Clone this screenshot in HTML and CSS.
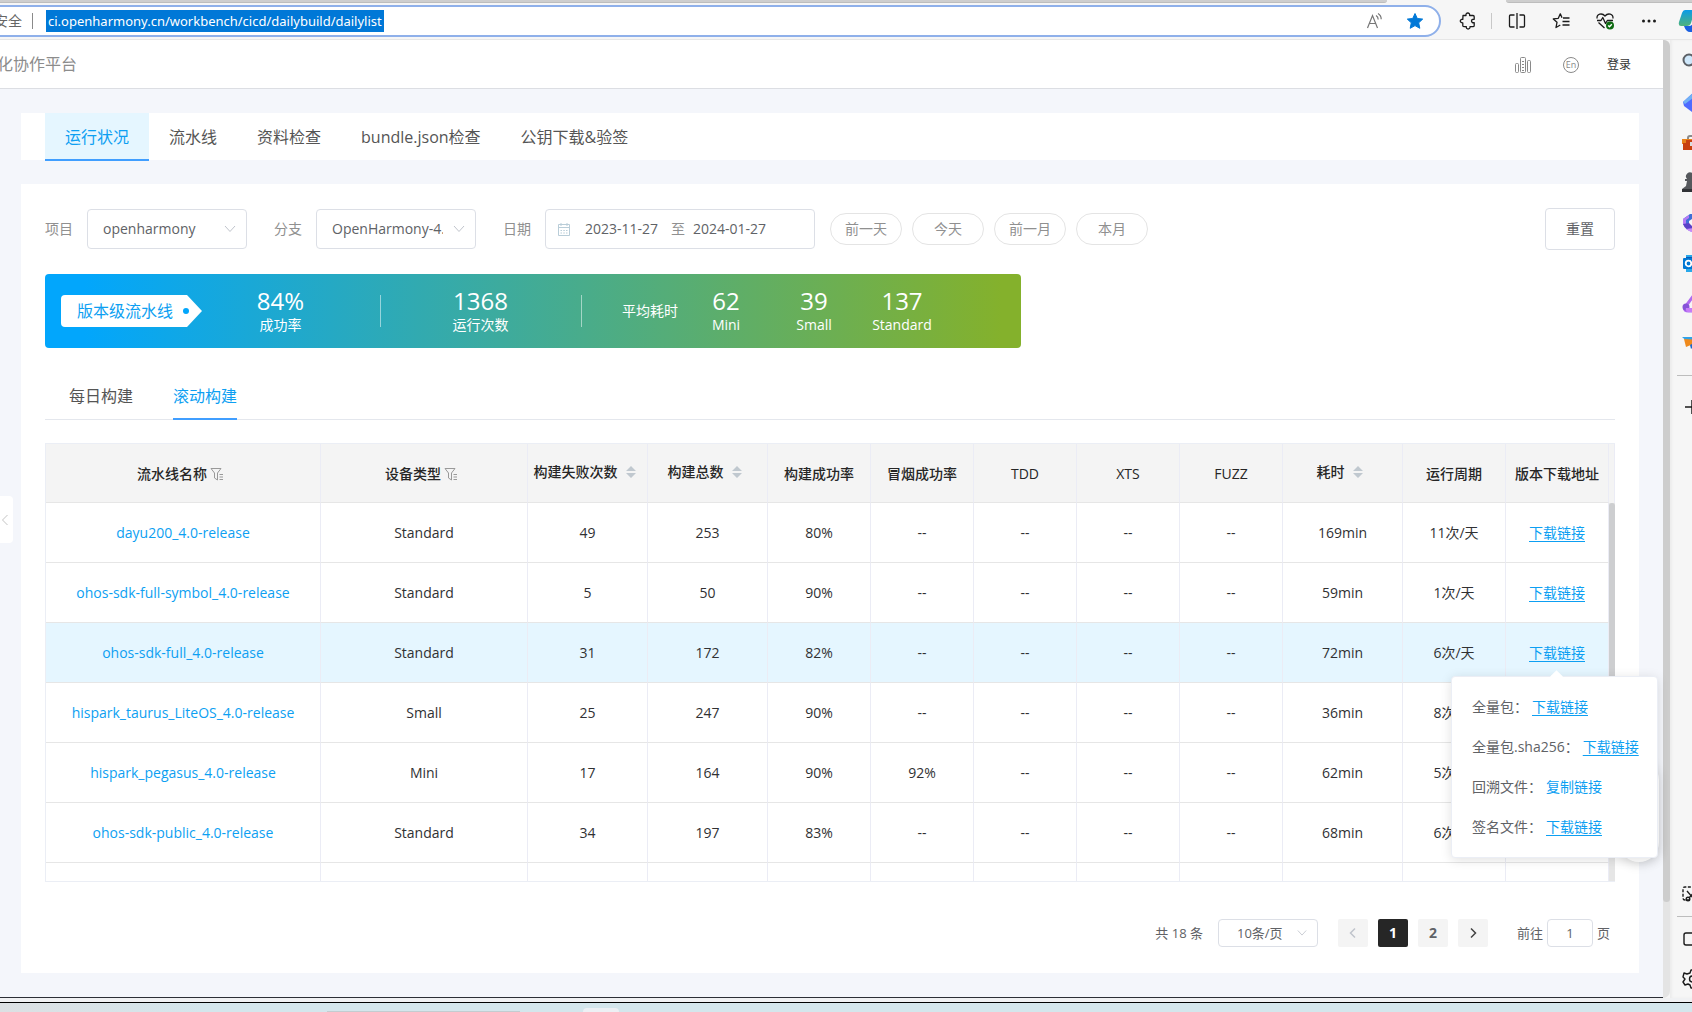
FILE: index.html
```html
<!DOCTYPE html>
<html lang="zh-CN">
<head>
<meta charset="utf-8">
<title>每日构建</title>
<link rel="stylesheet" href="styles.css">
</head>
<body>
<header class="browser">
  <div class="strip"><span class="strip-tab strip-left"></span><span class="strip-tab strip-right"></span></div>
  <div class="toolbar">
    <div class="address">
      <span class="address-safe">安全</span>
      <span class="address-sep"></span>
      <span class="address-url">ci.openharmony.cn/workbench/cicd/dailybuild/dailylist</span>
      <span class="address-icons">
        <svg width="18" height="18" viewBox="0 0 18 18" fill="none" stroke="#767676" stroke-width="1.2"><path d="M1.5 16 6.5 3.5 11.500 16M3.300 11.500h6.400M10 3.500c1.400.8 2.200 2.200 2.200 4M12 1.500c2 1.200 3.200 3.200 3.200 5.700"/></svg>
        <svg width="18" height="18" viewBox="0 0 18 18"><path fill="#0078d7" stroke="#0078d7" stroke-linejoin="round" d="m9 1.500 2.300 5 5.400.6-4 3.700 1.100 5.500L9 13.600l-4.800 2.700 1.100-5.500-4-3.700 5.400-.6z"/></svg>
      </span>
    </div>
    <div class="tools">
      <svg width="18" height="18" viewBox="0 0 18 18" fill="none" stroke="#1b1b1b" stroke-width="1.300" stroke-linejoin="round"><path d="M4 3.500h3c-.3-1.500.6-2.500 1.800-2.500s2.100 1 1.800 2.500H14c.8 0 1.200.4 1.200 1.200v2.600c-1.700-.2-2.700.6-2.700 1.700s1 2 2.700 1.700v2.800c0 .8-.4 1.200-1.200 1.200h-3c.2 1.500-.7 2.300-1.900 2.300s-2-.8-1.800-2.300H5c-.8 0-1.200-.4-1.200-1.200v-2.600C2.200 11 1.300 10 1.300 9s1-1.900 2.500-1.700z"/></svg>
      <span class="tools-sep"></span>
      <svg width="18" height="18" viewBox="0 0 18 18" fill="none" stroke="#1b1b1b" stroke-width="1.300"><path d="M6.500 3h-4q-1 0-1 1v10q0 1 1 1h4M11.500 3h4q1 0 1 1v10q0 1-1 1h-4M9 1v16"/></svg>
      <svg width="18" height="18" viewBox="0 0 18 18" fill="none" stroke="#1b1b1b" stroke-width="1.300" stroke-linejoin="round"><path d="M10 5.800 8.300 1.800 6.300 6.300l-5 .6 3.700 3.400-1 5.200 4.300-2.500M11 6h6.500M10.500 9.500h7M10.500 13h7"/></svg>
      <svg width="18" height="18" viewBox="0 0 18 18" fill="none" stroke="#1b1b1b" stroke-width="1.300" stroke-linejoin="round"><path d="M1 6.500C.6 1.800 6 .5 9 4c3-3.500 8.400-2.200 8 2.500M2.500 10.500 8.500 16M1 8.500h4l1.800-3 2.700 6 1.800-3H17"/><circle cx="14" cy="13.500" r="4" fill="#0e6b12" stroke="none"/><path stroke="#fff" d="m12.200 13.500 1.300 1.300 2.300-2.500"/></svg>
      <svg width="18" height="18" viewBox="0 0 18 18" fill="#1b1b1b"><circle cx="3.500" cy="9" r="1.500"/><circle cx="9" cy="9" r="1.500"/><circle cx="14.500" cy="9" r="1.500"/></svg>
    </div>
    <div class="copilot"><svg width="26" height="26" viewBox="0 0 26 26"><defs><linearGradient id="cp" x1="0" y1="0" x2="0" y2="1"><stop offset="0" stop-color="#0a9be8"/><stop offset="1" stop-color="#4fb37c"/></linearGradient></defs><path fill="url(#cp)" d="M7 2h15l-6 3-3 10q-1 3-4 3H3q-3 0-2-4l3-9q1-3 3-3z"/><path fill="#1a5fe0" d="M6 18h5q3 0 4-3l2 9h-5q-4 0-6-6z"/><path fill="#1299dd" d="m14 14 3 10h-3z"/></svg></div>
  </div>
</header>

<div class="window">
  <div class="page">
    <header class="site-header">
      <span class="site-name">化协作平台</span>
      <nav class="site-nav">
        <svg width="18" height="18" viewBox="0 0 18 18" fill="none" stroke="#8a8a8a"><rect x="1.500" y="7.500" width="3" height="9" rx="1"/><rect x="6.500" y="1.500" width="5" height="15" rx="1"/><rect x="13.500" y="4.500" width="3" height="12" rx="1"/><path d="M8 5.500h2M8 8.500h2M8 11.500h2M8 14.500h2"/></svg>
        <span class="lang">En</span>
        <a class="login" href="#login">登录</a>
      </nav>
    </header>

    <main class="content">
      <nav class="tabs">
        <a class="tab tab-active" href="#status">运行状况</a>
        <a class="tab" href="#pipeline">流水线</a>
        <a class="tab" href="#docs">资料检查</a>
        <a class="tab" href="#bundle">bundle.json检查</a>
        <a class="tab" href="#key">公钥下载&amp;验签</a>
      </nav>

      <section class="card">
        <form class="filters">
          <label for="project">项目</label>
          <span class="select">
            <select id="project"><option>openharmony</option></select>
            <svg width="12" height="12" viewBox="0 0 12 12" fill="none" stroke="#c0c4cc"><path d="m1 3 5 5.500L11 3"/></svg>
          </span>
          <label for="branch">分支</label>
          <span class="select">
            <select id="branch"><option>OpenHarmony-4.</option></select>
            <svg width="12" height="12" viewBox="0 0 12 12" fill="none" stroke="#c0c4cc"><path d="m1 3 5 5.500L11 3"/></svg>
          </span>
          <label for="from">日期</label>
          <span class="range">
            <svg width="14" height="14" viewBox="0 0 14 14" fill="none" stroke="#b9cdd8"><path d="M1.500 2.500h11v11h-11zM1.500 5.500h11M4 1v3M10 1v3M3.500 8.500H5M6.300 8.500h1.500M9 8.500h1.500M3.500 11H5M6.300 11h1.500M9 11h1.500"/></svg>
            <input id="from" type="text" value="2023-11-27">
            <span class="range-to">至</span>
            <input type="text" value="2024-01-27" aria-label="结束日期">
          </span>
          <span class="quick">
            <button type="button">前一天</button>
            <button type="button">今天</button>
            <button type="button">前一月</button>
            <button type="button">本月</button>
          </span>
          <button class="reset" type="reset">重置</button>
        </form>

        <div class="summary">
          <div class="badge"><span class="badge-text">版本级流水线<i class="badge-dot"></i></span><span class="badge-tip"></span></div>
          <div class="stat stat-rate"><b>84%</b><span>成功率</span></div>
          <div class="stat stat-runs stat-line"><b>1368</b><span>运行次数</span></div>
          <div class="average stat-line">平均耗时</div>
          <div class="stat"><b>62</b><span>Mini</span></div>
          <div class="stat"><b>39</b><span>Small</span></div>
          <div class="stat"><b>137</b><span>Standard</span></div>
        </div>

        <nav class="subtabs">
          <a class="subtab" href="#daily">每日构建</a>
          <a class="subtab subtab-active" href="#rolling">滚动构建</a>
        </nav>

        <div class="grid">
          <table>
            <colgroup><col><col class="c-type"><col class="c-num"><col class="c-num"><col class="c-std"><col class="c-std"><col class="c-std"><col class="c-std"><col class="c-std"><col class="c-num"><col class="c-std"><col class="c-std"></colgroup>
            <thead>
              <tr>
                <th><span class="th">流水线名称<svg width="14" height="14" viewBox="0 0 14 14" fill="none" stroke="#999"><path d="M1 1.500h10L7.500 6v7L4.500 11V6zM9.500 7.500H13M9.500 10H13M9.500 12.500H13"/></svg></span></th>
                <th><span class="th">设备类型<svg width="14" height="14" viewBox="0 0 14 14" fill="none" stroke="#999"><path d="M1 1.500h10L7.500 6v7L4.500 11V6zM9.500 7.500H13M9.500 10H13M9.500 12.500H13"/></svg></span></th>
                <th><span class="th th-sort">构建失败次数<svg width="10" height="12" viewBox="0 0 10 12" fill="#c0c8cf"><path d="m5 0 5 5H0zM5 12 0 7h10z"/></svg></span></th>
                <th><span class="th th-sort">构建总数<svg width="10" height="12" viewBox="0 0 10 12" fill="#c0c8cf"><path d="m5 0 5 5H0zM5 12 0 7h10z"/></svg></span></th>
                <th>构建成功率</th><th>冒烟成功率</th><th>TDD</th><th>XTS</th><th>FUZZ</th>
                <th><span class="th th-sort">耗时<svg width="10" height="12" viewBox="0 0 10 12" fill="#c0c8cf"><path d="m5 0 5 5H0zM5 12 0 7h10z"/></svg></span></th>
                <th>运行周期</th><th>版本下载地址</th>
              </tr>
            </thead>
            <tbody>
              <tr><td><a href="#p1">dayu200_4.0-release</a></td><td>Standard</td><td>49</td><td>253</td><td>80%</td><td>--</td><td>--</td><td>--</td><td>--</td><td>169min</td><td>11次/天</td><td><a class="link" href="#d1">下载链接</a></td></tr>
              <tr><td><a href="#p2">ohos-sdk-full-symbol_4.0-release</a></td><td>Standard</td><td>5</td><td>50</td><td>90%</td><td>--</td><td>--</td><td>--</td><td>--</td><td>59min</td><td>1次/天</td><td><a class="link" href="#d2">下载链接</a></td></tr>
              <tr class="hover"><td><a href="#p3">ohos-sdk-full_4.0-release</a></td><td>Standard</td><td>31</td><td>172</td><td>82%</td><td>--</td><td>--</td><td>--</td><td>--</td><td>72min</td><td>6次/天</td><td class="anchor"><a class="link" href="#d3">下载链接</a>
                <div class="popover">
                  <p>全量包：<a class="link" href="#full">下载链接</a></p>
                  <p>全量包.sha256：<a class="link" href="#sha">下载链接</a></p>
                  <p>回溯文件：<a href="#trace">复制链接</a></p>
                  <p>签名文件：<a class="link" href="#sign">下载链接</a></p>
                </div></td></tr>
              <tr><td><a href="#p4">hispark_taurus_LiteOS_4.0-release</a></td><td>Small</td><td>25</td><td>247</td><td>90%</td><td>--</td><td>--</td><td>--</td><td>--</td><td>36min</td><td>8次/天</td><td></td></tr>
              <tr><td><a href="#p5">hispark_pegasus_4.0-release</a></td><td>Mini</td><td>17</td><td>164</td><td>90%</td><td>92%</td><td>--</td><td>--</td><td>--</td><td>62min</td><td>5次/天</td><td></td></tr>
              <tr><td><a href="#p6">ohos-sdk-public_4.0-release</a></td><td>Standard</td><td>34</td><td>197</td><td>83%</td><td>--</td><td>--</td><td>--</td><td>--</td><td>68min</td><td>6次/天</td><td></td></tr>
              <tr class="peek"><td></td><td></td><td></td><td></td><td></td><td></td><td></td><td></td><td></td><td></td><td></td><td></td></tr>
            </tbody>
          </table>
          <div class="rail"><span class="rail-head"></span><span class="rail-thumb"></span></div>
        </div>

        <div class="pager">
          <span class="pager-total">共 18 条</span>
          <span class="select select-small">
            <select aria-label="每页条数"><option>10条/页</option></select>
            <svg width="10" height="10" viewBox="0 0 12 12" fill="none" stroke="#c0c4cc"><path d="m1 3 5 5.500L11 3"/></svg>
          </span>
          <span class="pages">
            <button type="button" disabled aria-label="上一页"><svg width="12" height="12" viewBox="0 0 12 12" fill="none" stroke="#c0c4cc" stroke-width="1.500"><path d="M8 1.500 3.500 6 8 10.500"/></svg></button>
            <button type="button" class="current">1</button>
            <button type="button">2</button>
            <button type="button" aria-label="下一页"><svg width="12" height="12" viewBox="0 0 12 12" fill="none" stroke="#444" stroke-width="1.500"><path d="M4 1.500 8.500 6 4 10.500"/></svg></button>
          </span>
          <label class="jump">前往<input type="text" value="1">页</label>
        </div>
      </section>
      <button class="fold" type="button" aria-label="展开侧栏"><svg width="8" height="12" viewBox="0 0 8 12" fill="none" stroke="#c4c4c4"><path d="M6.500 1 1.500 6l5 5"/></svg></button>
      <div class="float"></div>
    </main>
  </div>
  <div class="scroll"><span class="scroll-thumb"></span></div>
  <aside class="sidebar">
    <svg width="24" height="24" viewBox="0 0 24 24"><circle cx="7" cy="9" r="5.500" fill="#cfe8fb" stroke="#5c6066" stroke-width="2"/><path stroke="#5c6066" stroke-width="3" d="m11 13 6 6"/></svg>
    <svg width="24" height="24" viewBox="0 0 24 24"><path fill="#4f6bff" d="M1 11 12 1l10 10-12 10-8-6z"/><path fill="#71b1f5" d="M1 11 12 1l3 3L3 13z"/></svg>
    <svg width="24" height="24" viewBox="0 0 24 24"><path fill="none" stroke="#8b8b8b" stroke-width="2" d="M6 9V7q0-2 2-2h6q2 0 2 2v2"/><path fill="#e8821a" d="M0 8h22v5H0z"/><path fill="#c8400f" d="M1 12h20v7H1zM4 9h14v3H4z"/><path fill="#d8dde0" d="M8 11h4v4H8z"/></svg>
    <svg width="24" height="24" viewBox="0 0 24 24"><path fill="#55585c" d="M0 21v-3l4-3 1-5H3V8h2a4 4 0 1 1 6 0h2v2h-2l1 5 4 3v3z"/><path fill="#303236" d="M0 18h16v3H0z"/></svg>
    <svg width="24" height="24" viewBox="0 0 24 24"><path fill="#3f6fd6" d="M1 8 8 3h6l-4 5-3 2v7l-4-2-2-2z"/><path fill="#b57af5" d="M1 8 7 4v3L4 9v6l-3-2z"/><path fill="#5b40c8" d="m1 13 6-1 5 5 6 3-7 1q-8-2-10-8z"/><path fill="#c58bfa" d="m4 18 8-1 5 4h-8z"/></svg>
    <svg width="24" height="24" viewBox="0 0 24 24"><path fill="#28a8ea" d="M4 4h18v17H4z"/><path fill="#0a58b5" d="M4 6h18v11H4z"/><rect x="1" y="7" width="11" height="11" rx="1" fill="#0078d4"/><circle cx="6.500" cy="12.500" r="2.800" fill="none" stroke="#fff" stroke-width="1.800"/></svg>
    <svg width="24" height="24" viewBox="0 0 24 24"><path fill="none" stroke="#b06af0" stroke-width="3" stroke-linejoin="round" d="M12 4 2.500 17q0 3 4 3H20"/><circle cx="4" cy="16" r="3.500" fill="#8652d8"/><path fill="#c67cf8" d="M4 17h18v4H6q-3-1-2-4z"/></svg>
    <svg width="24" height="24" viewBox="0 0 24 24"><path fill="#2fa2e8" d="M0 6h22l-9 12-5-5z"/><path fill="#ef8a1c" d="m2 8 18 1-16 7z"/><path fill="#1c68c9" d="m8 14 9-5-8 9z"/></svg>
    <span class="side-line"></span>
    <svg width="24" height="24" viewBox="0 0 24 24" fill="none" stroke="#1b1b1b" stroke-width="1.500"><path d="M3 12h14M10 5v14"/></svg>
    <svg class="side-bottom" width="24" height="24" viewBox="0 0 24 24" fill="none" stroke="#1b1b1b" stroke-width="1.400"><path stroke-dasharray="3 1.500" d="M8 18H3q-2 0-2-2V7q0-2 2-2h12"/><path d="m5 9 7 8M13 9l-6 7"/><circle cx="6" cy="17" r="1.800"/></svg>
    <span class="side-line"></span>
    <svg width="24" height="24" viewBox="0 0 24 24" fill="none" stroke="#1b1b1b" stroke-width="1.400"><rect x="2" y="6" width="18" height="12" rx="2"/></svg>
    <svg width="24" height="24" viewBox="0 0 24 24" fill="none" stroke="#1b1b1b" stroke-width="1.400" stroke-linejoin="round"><path d="m9 3-1 3-3 1-3-1-1 4 2 2-2 3 2 3 3-1 2 1 1 3h4l1-3 3-1 3 1 1-3-2-3 2-3-2-3-3 1-2-1-1-3z"/><circle cx="10.500" cy="12" r="3"/></svg>
  </aside>
</div>
<footer class="taskbar"><span class="task-field"></span><span class="task-app"></span></footer>
</body>
</html>
```
FILE: styles.css
```css
* { box-sizing: border-box; }
body {
  margin: 0;
  min-height: 100vh;
  display: flex;
  flex-direction: column;
  overflow: hidden;
  background: #f6f6f6;
  color: #606266;
  font: 14px/20px "Open Sans", "Noto Sans CJK SC", sans-serif;
}
svg { display: block; flex: none; }
a { color: #0d9ff2; text-decoration: none; }
button, input, select { font: inherit; color: inherit; margin: 0; }

/* browser chrome */
.strip { display: flex; justify-content: space-between; height: 3px; }
.strip-tab { background: #cecece; border-bottom: 1px solid #bdbdbd; }
.strip-left { width: 82%; border-radius: 0 0 4px 0; }
.strip-right { width: 11%; border-radius: 0 0 0 4px; }
.toolbar { display: flex; align-items: center; height: 37px; border-bottom: 1px solid #e6e6e6; }
.address {
  flex: 1;
  display: flex;
  align-items: center;
  height: 32px;
  margin-left: -8px;
  padding-right: 15px;
  background: #fff;
  border: 2px solid #8fb0ea;
  border-radius: 0 16px 16px 0;
}
.address-safe { color: #666; }
.address-sep { width: 1px; height: 16px; margin: 0 13px 0 10px; background: #8a8a8a; }
.address-url { padding: 1px 2px; background: #0078d7; color: #fff; font-family: "Noto Sans", "Noto Sans CJK SC", sans-serif; font-size: 13px; }
.address-icons { display: flex; gap: 22px; margin-left: auto; }
.tools { display: flex; align-items: center; gap: 26px; margin-left: 18px; }
.tools-sep { width: 1px; height: 16px; margin: 0 -10px 0 -12px; background: #c8c8c8; }
.copilot { width: 14px; margin-left: 20px; overflow: hidden; }

.window { flex: 1; display: flex; }
.page { flex: 1; min-width: 0; display: flex; flex-direction: column; background: #f4f6fb; border-bottom: 1px solid #2c2f36; }
.scroll { width: 7px; background: #e4e4e4; border-radius: 0 7px 7px 0; }
.scroll-thumb { display: block; height: 90%; background: #cdcdcd; border-radius: 0 7px 4px 4px; }
.sidebar { width: 22px; display: flex; flex-direction: column; gap: 16px; padding: 11px 0 7px 12px; overflow: hidden; box-shadow: inset 2px 0 2px #ececec; }
.side-line { flex: none; height: 1px; margin: 4px 0 3px -5px; background: #bdbdbd; }
.side-bottom { margin-top: auto; }
.side-bottom + .side-line { margin-top: -6px; margin-bottom: -6px; }
.taskbar { display: flex; align-items: flex-end; height: 14px; padding-left: 327px; border-top: 4px solid #f0f1f3; background: linear-gradient(90deg, #dce0e3, #d4e6ec 12%); box-shadow: inset 0 1px #000; }
.task-field { width: 193px; height: 1px; background: #c3ccd0; }
.task-app { width: 36px; height: 4px; margin-left: 63px; border-radius: 4px 4px 0 0; background: #edf0f4; }

/* site header */
.site-header { display: flex; align-items: center; justify-content: space-between; height: 49px; padding-right: 32px; background: #fff; border-bottom: 1px solid #dcdee3; }
.site-name { margin-left: -3px; color: #8c8c8c; font-size: 16px; }
.site-nav { display: flex; align-items: center; padding-top: 2px; }
.lang { width: 16px; height: 16px; margin: 0 28px 0 31px; border: 1px solid #8a8a8a; border-radius: 8px; color: #8a8a8a; font-size: 9px; line-height: 14px; text-align: center; }
.login { color: #333; font-size: 12px; }

.content { position: relative; flex: 1; padding: 24px 24px 24px 21px; }
.tabs { display: flex; height: 47px; margin-bottom: 24px; padding: 0 24px; background: #fff; }
.tab { height: 48px; padding: 0 20px; color: #555; font-size: 16px; line-height: 48px; }
.tab-active { background: #e5f6ff; color: #0d9ff2; border-bottom: 2px solid #409eff; }

.card { padding: 24px 24px 26px; background: #fff; }

/* filters */
.filters { display: flex; align-items: center; }
.filters label { color: #909090; }
.select { display: inline-grid; align-items: center; width: 160px; margin: 0 27px 0 14px; }
.select select { grid-area: 1 / 1; width: 100%; height: 40px; padding: 0 32px 0 15px; appearance: none; background: #fff; border: 1px solid #dcdfe6; border-radius: 4px; }
.select svg { grid-area: 1 / 1; justify-self: end; margin-right: 11px; pointer-events: none; }
.range { display: flex; align-items: center; width: 270px; height: 40px; margin: 0 15px 0 14px; padding-left: 11px; border: 1px solid #dcdfe6; border-radius: 4px; }
.range input { width: 78px; padding: 0; border: 0; background: none; }
.range svg { margin-right: 14px; }
.range-to { margin: 0 8px; color: #909090; }
.quick { display: flex; gap: 10px; }
.quick button { width: 72px; height: 32px; padding: 0; background: #fff; border: 1px solid #e4e4e4; border-radius: 16px; color: #909090; }
.reset { width: 70px; height: 42px; margin-left: auto; background: #fff; border: 1px solid #dcdfe6; border-radius: 4px; }

/* summary banner */
.summary { display: flex; align-items: center; width: 976px; max-width: 100%; height: 74px; margin: 24px 0; padding-left: 16px; border-radius: 4px; background: linear-gradient(90deg, #02a6fc 4%, #84b12c 98%); color: #fff; }
.badge { display: flex; width: 142px; }
.badge-text { display: flex; align-items: center; gap: 10px; height: 32px; padding-left: 16px; background: #fff; border-radius: 4px 0 0 4px; color: #0d9ff2; font-size: 16px; }
.badge-dot { width: 6px; height: 6px; margin-right: -2px; border-radius: 3px; background: #02a6fc; z-index: 1; }
.badge-tip { border: solid transparent; border-width: 16px 0 16px 15px; border-left-color: #fff; }
.stat { display: flex; flex-direction: column; align-items: center; width: 88px; }
.stat b { font-size: 24px; font-weight: 400; line-height: 28px; }
.stat-rate { width: 177px; padding-right: 22px; }
.stat-runs { width: 201px; }
.stat-line { position: relative; }
.stat-line::before { content: ""; position: absolute; left: 0; top: 50%; width: 1px; height: 32px; margin-top: -16px; background: #ffffff80; }
.average { width: 101px; padding-left: 41px; white-space: nowrap; }

/* sub tabs */
.subtabs { display: flex; gap: 40px; padding-left: 24px; border-bottom: 1px solid #e4e7ed; }
.subtab { height: 48px; margin-bottom: -1px; color: #555; font-size: 16px; line-height: 48px; }
.subtab-active { color: #0d9ff2; border-bottom: 2px solid #409eff; }

/* table */
.grid { display: flex; margin-top: 23px; border: solid #ebeef5; border-width: 1px 0 1px 1px; }
table { flex: 1; width: 100%; min-width: 0; table-layout: fixed; border-spacing: 0; color: #303133; }
.c-type { width: 207px; }
.c-num { width: 120px; }
.c-std { width: 103px; }
th, td { padding: 0; border-right: 1px solid #ebecf5; border-bottom: 1px solid #e6e6e6; text-align: center; white-space: nowrap; }
th { height: 59px; padding-top: 1px; background: #f4f4f4; color: #262626; font-weight: 500; }
td { height: 60px; }
.th { display: inline-flex; align-items: center; gap: 3px; padding-right: 5px; }
.th-sort { gap: 8px; padding: 0 6px 4px 0; }
.hover td { background: #e5f6ff; }
.peek td { height: 18px; border-bottom: 0; }
.link { text-decoration: underline; text-underline-offset: 3px; }
.rail { width: 6px; background: #e6e6e6; }
.rail-head { display: block; height: 59px; background: #f4f4f4; border-right: 1px solid #ebecf5; }
.rail-thumb { display: block; height: 239px; background: #cdced0; border-radius: 3px; }

/* download popover */
.anchor { position: relative; }
.popover { position: absolute; z-index: 3; top: 53px; left: 50%; width: 207px; margin-left: -106px; padding: 20px 0 12px 20px; background: #fff; border: 1px solid #ebeef5; border-radius: 4px; box-shadow: 0 2px 12px #0000001f; color: #606266; text-align: left; }
.popover::before { content: ""; position: absolute; left: 50%; top: -5px; width: 9px; height: 9px; margin-left: -3px; background: #fff; transform: rotate(45deg); }
.popover p { margin: 0 0 20px; }
.popover p:last-child { margin-bottom: 8px; }
.popover a { margin-left: 4px; }
.float { position: absolute; right: 4px; bottom: 135px; width: 40px; height: 102px; border-radius: 20px; background: #fff; box-shadow: 0 2px 12px #00000026; }

/* pagination */
.pager { display: flex; align-items: center; justify-content: flex-end; margin-top: 37px; padding-right: 5px; font-size: 13px; }
.select-small { width: 100px; margin: 0 20px 0 15px; }
.select-small select { height: 28px; padding: 0 24px 0 18px; }
.pages { display: flex; gap: 10px; }
.pages button { display: flex; align-items: center; justify-content: center; width: 30px; height: 28px; padding: 0; background: #f4f4f4; border: 0; border-radius: 2px; font-size: 14px; font-weight: 700; }
.pages .current { background: #262626; color: #fff; }
.jump { display: flex; align-items: center; gap: 4px; margin-left: 29px; }
.jump input { width: 46px; height: 28px; padding: 0; border: 1px solid #dcdfe6; border-radius: 4px; text-align: center; }

.fold { position: absolute; left: 0; top: 407px; width: 13px; height: 47px; padding: 0 0 0 1px; background: #fff; border: 0; border-radius: 0 4px 4px 0; }
```
